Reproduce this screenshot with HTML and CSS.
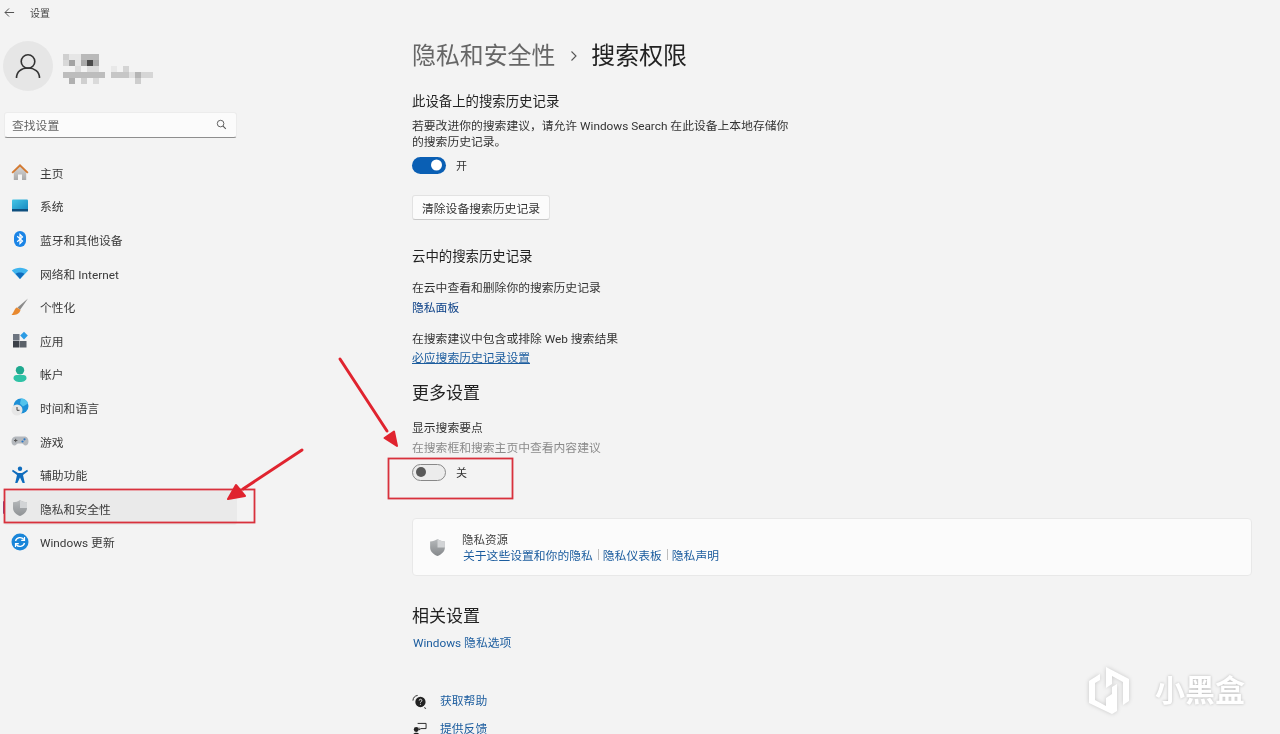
FILE: index.html
```html
<!DOCTYPE html>
<html lang="zh-CN">
<head>
<meta charset="utf-8">
<title>设置</title>
<link rel="stylesheet" href="styles.css">
</head>
<body>
<div class="page">
  <header class="titlebar">
    <svg class="back" viewBox="0 0 12 12"><path d="M11 6H1.2M5.500 1.600 1.100 6l4.400 4.400" fill="none" stroke="#444" stroke-width="1"/></svg>
    <span>设置</span>
  </header>
  <div class="layout">
    <aside class="sidebar">
      <div class="user">
        <div class="avatar">
          <svg viewBox="0 0 26 26"><circle cx="13" cy="8.500" r="6.800" fill="none" stroke="#333" stroke-width="1.600"/><path d="M1.500 25c0-6.500 5-10 11.500-10s11.500 3.500 11.500 10" fill="none" stroke="#333" stroke-width="1.600"/></svg>
        </div>
        <svg class="mosaic" viewBox="0 0 92 32" shape-rendering="crispEdges">
          <rect x="0" y="0" width="6" height="6" fill="#cfcfcf"/><rect x="6" y="0" width="12" height="6" fill="#e6e6e6"/><rect x="18" y="0" width="18" height="6" fill="#b9b9b9"/>
          <rect x="0" y="6" width="6" height="6" fill="#d8d8d8"/><rect x="6" y="6" width="6" height="6" fill="#a3a3a3"/><rect x="12" y="6" width="6" height="6" fill="#e6e6e6"/><rect x="18" y="6" width="6" height="6" fill="#aaa"/><rect x="24" y="6" width="6" height="6" fill="#4a4a4a"/><rect x="30" y="6" width="6" height="6" fill="#aaa"/>
          <rect x="12" y="12" width="6" height="6" fill="#ddd"/><rect x="24" y="12" width="12" height="6" fill="#ddd"/><rect x="48" y="12" width="6" height="6" fill="#e8e8e8"/><rect x="60" y="12" width="6" height="6" fill="#d4d4d4"/>
          <rect x="0" y="18" width="42" height="6" fill="#bdbdbd"/><rect x="48" y="18" width="18" height="6" fill="#c6c6c6"/><rect x="66" y="18" width="6" height="6" fill="#e0e0e0"/><rect x="72" y="18" width="6" height="6" fill="#b5b5b5"/><rect x="78" y="18" width="12" height="6" fill="#d6d6d6"/>
          <rect x="6" y="24" width="6" height="6" fill="#b0b0b0"/><rect x="18" y="24" width="6" height="6" fill="#cfcfcf"/><rect x="30" y="24" width="6" height="6" fill="#dadada"/><rect x="72" y="24" width="6" height="6" fill="#cdcdcd"/>
        </svg>
      </div>
      <div class="search">
        <span>查找设置</span>
        <svg viewBox="0 0 12 12"><circle cx="5" cy="5" r="3.600" fill="none" stroke="#555" stroke-width="1"/><path d="m7.700 7.700 3 3" stroke="#555" stroke-width="1.100"/></svg>
      </div>
      <nav class="nav">
        <a class="nav-item">
          <svg viewBox="0 0 18 18"><defs><linearGradient id="h1" x1="0" y1="0" x2="0" y2="1"><stop offset="0" stop-color="#d8d8d8"/><stop offset="1" stop-color="#a8a8a8"/></linearGradient></defs><path d="M2.800 8.500 9 3l6.200 5.500V17H2.800z" fill="url(#h1)"/><path d="M7 17v-5.500h4V17z" fill="#f5f5f5"/><path d="M.5 9.200 9 1l8.500 8.200-1.300 1.300L9 3.700 1.800 10.500z" fill="#d37a32"/></svg>
          <span>主页</span>
        </a>
        <a class="nav-item">
          <svg viewBox="0 0 18 18"><defs><linearGradient id="g1" x1="0" y1="0" x2="1" y2="1"><stop offset="0" stop-color="#45c6e6"/><stop offset="1" stop-color="#1487c0"/></linearGradient></defs><rect x="1" y="2.500" width="16" height="11" rx="1" fill="url(#g1)"/><rect x="1" y="12" width="16" height="2.500" fill="#0e4f7e"/></svg>
          <span>系统</span>
        </a>
        <a class="nav-item">
          <svg viewBox="0 0 18 18"><rect x="3" y="1" width="12" height="16" rx="6" fill="#1a84e6"/><path d="M6.200 6.200 11.500 11 9 13.500v-9L11.500 7 6.200 11.800" fill="none" stroke="#fff" stroke-width="1.200"/></svg>
          <span>蓝牙和其他设备</span>
        </a>
        <a class="nav-item">
          <svg viewBox="0 0 18 18"><path d="M.8 6.500C5.500 2.800 12.500 2.800 17.200 6.500L9 15z" fill="#3fb4ee"/><path d="M4.500 9.800c2.700-1.900 6.300-1.900 9 0L9 15z" fill="#0f6cbd"/></svg>
          <span>网络和 Internet</span>
        </a>
        <a class="nav-item">
          <svg viewBox="0 0 18 18"><path d="M17 .5 6.500 9.500l2.500 2.500z" fill="#8b8b8b"/><path d="M6 9.500c-2.500.5-2.500 4-5.500 7.500 4 .2 8-.8 9-5z" fill="#e8892f"/></svg>
          <span>个性化</span>
        </a>
        <a class="nav-item">
          <svg viewBox="0 0 18 18"><rect x="2" y="3" width="6.500" height="6.500" fill="#6d7580"/><rect x="2" y="10" width="6.500" height="6.500" fill="#3c4148"/><rect x="9" y="10" width="6.500" height="6.500" fill="#5b6169"/><path d="m13 .8 3.800 3.800L13 8.400 9.200 4.600z" fill="#2b9be4"/></svg>
          <span>应用</span>
        </a>
        <a class="nav-item">
          <svg viewBox="0 0 18 18"><circle cx="9" cy="5.200" r="4.200" fill="#1fa98f"/><path d="M2.500 13c0-2 1.500-3 3-3h7c1.500 0 3 1 3 3 0 2.500-3 4-6.500 4s-6.500-1.500-6.500-4z" fill="#2fc2a6"/></svg>
          <span>帐户</span>
        </a>
        <a class="nav-item">
          <svg viewBox="0 0 18 18"><circle cx="10" cy="8" r="7.500" fill="#1c8fd6"/><path d="M10 .5a7.500 7.500 0 0 1 7 5l-5 3-3-3z" fill="#52c3ec"/><circle cx="6" cy="12" r="5.500" fill="#e6e6e6"/><path d="M6 9v3.300h2.500" fill="none" stroke="#444" stroke-width="1"/></svg>
          <span>时间和语言</span>
        </a>
        <a class="nav-item">
          <svg viewBox="0 0 18 18"><path d="M4.500 4.500h9c2.500 0 4 2.300 4 5s-1.500 4-3 4-2.500-2-3.500-2H7c-1 0-2 2-3.500 2s-3-1.300-3-4 1.500-5 4-5z" fill="#b4b8bd"/><path d="M3 8.500h3.400M4.700 6.800v3.400" stroke="#555" stroke-width="1"/><circle cx="13.500" cy="7.300" r="1.100" fill="#2a78c8"/><circle cx="11.500" cy="9.500" r="1.100" fill="#2a78c8"/></svg>
          <span>游戏</span>
        </a>
        <a class="nav-item">
          <svg viewBox="0 0 18 18"><circle cx="9" cy="2.800" r="2.200" fill="#0f6cbd"/><path d="M1.800 3.800 7 7h4l5.200-3.200.8 1.500L12 9l1.800 8h-2.200L9 11.500 6.400 17H4.200L6 9 1 5.300z" fill="#0f6cbd"/></svg>
          <span>辅助功能</span>
        </a>
        <a class="nav-item active">
          <svg viewBox="0 0 18 18"><defs><linearGradient id="s1" x1="0" y1="0" x2="0" y2="1"><stop offset="0" stop-color="#b6b9bb"/><stop offset="1" stop-color="#8f9295"/></linearGradient></defs><path d="M9 1c2 1.500 4.500 2.200 7 2.300V9c0 4-3.500 6.800-7 8-3.500-1.200-7-4-7-8V3.300C4.500 3.200 7 2.500 9 1z" fill="url(#s1)"/><path d="M9 1c2 1.500 4.500 2.200 7 2.300V9H9z" fill="#d2d4d6"/></svg>
          <span>隐私和安全性</span>
        </a>
        <a class="nav-item">
          <svg viewBox="0 0 18 18"><circle cx="9" cy="9" r="8.500" fill="#1a86d9"/><path d="M4.500 8a4.700 4.700 0 0 1 8.300-1.500M13.500 10a4.700 4.700 0 0 1-8.300 1.500" fill="none" stroke="#fff" stroke-width="1.300"/><path d="M13.500 4v3.300h-3.300M4.500 14v-3.300h3.300" fill="none" stroke="#fff" stroke-width="1.200"/></svg>
          <span>Windows 更新</span>
        </a>
      </nav>
    </aside>
    <main class="main">
      <h1 class="title"><span class="crumb">隐私和安全性</span><svg class="chev" viewBox="0 0 8 12"><path d="m1.500 1.500 4.500 4.500-4.500 4.500" fill="none" stroke="#555" stroke-width="1.100"/></svg><span>搜索权限</span></h1>

      <h3 class="sub first">此设备上的搜索历史记录</h3>
      <p class="text wrap">若要改进你的搜索建议，请允许 Windows Search 在此设备上本地存储你的搜索历史记录。</p>
      <div class="toggle-row on-row"><span class="toggle on"></span><span>开</span></div>
      <button class="btn">清除设备搜索历史记录</button>

      <h3 class="sub cloud">云中的搜索历史记录</h3>
      <p class="text l1">在云中查看和删除你的搜索历史记录</p>
      <p class="link-line"><a class="link dark">隐私面板</a></p>
      <p class="text l2">在搜索建议中包含或排除 Web 搜索结果</p>
      <p class="link-line tight"><a class="link under">必应搜索历史记录设置</a></p>

      <h2 class="section more">更多设置</h2>
      <p class="text l1b">显示搜索要点</p>
      <p class="text muted">在搜索框和搜索主页中查看内容建议</p>
      <div class="toggle-row off-row"><span class="toggle off"></span><span>关</span></div>

      <section class="card">
        <svg class="card-icon" viewBox="0 0 18 18"><defs><linearGradient id="s2" x1="0" y1="0" x2="0" y2="1"><stop offset="0" stop-color="#b6b9bb"/><stop offset="1" stop-color="#85888b"/></linearGradient></defs><path d="M9 1c2 1.500 4.500 2.200 7 2.300V9c0 4-3.500 6.800-7 8-3.500-1.200-7-4-7-8V3.300C4.500 3.200 7 2.500 9 1z" fill="url(#s2)"/><path d="M9 1c2 1.500 4.500 2.200 7 2.300V9H9z" fill="#d2d4d6"/></svg>
        <div class="card-body">
          <div class="card-title">隐私资源</div>
          <div class="card-links"><a class="link">关于这些设置和你的隐私</a><i class="sep"></i><a class="link">隐私仪表板</a><i class="sep"></i><a class="link">隐私声明</a></div>
        </div>
      </section>

      <h2 class="section related">相关设置</h2>
      <p class="link-line win"><a class="link">Windows 隐私选项</a></p>

      <div class="help help-first">
        <svg viewBox="0 0 16 16"><circle cx="9" cy="8.500" r="5.500" fill="#222"/><path d="M1 7a6 6 0 0 1 5-5.500M13 14.500l2 1" fill="none" stroke="#222" stroke-width="1"/><path d="M7.700 7a1.400 1.400 0 1 1 1.900 1.300c-.5.200-.6.500-.6 1M9 10.500v1" fill="none" stroke="#fff" stroke-width=".9"/></svg>
        <a class="link">获取帮助</a>
      </div>
      <div class="help help-second">
        <svg viewBox="0 0 16 16"><circle cx="4.500" cy="8" r="2.600" fill="#222"/><path d="M.5 16c0-3 1.500-4.500 4-4.500s4 1.500 4 4.500z" fill="#222"/><path d="M6 1.500h9v5.500H9.500L7.500 8.500V6" fill="none" stroke="#222" stroke-width="1"/></svg>
        <a class="link">提供反馈</a>
      </div>
    </main>
  </div>

  <svg class="marks" viewBox="0 0 1280 734">
    <rect x="4.500" y="489.500" width="250" height="33" fill="none" stroke="#d8313c" stroke-width="1.800"/>
    <rect x="388.500" y="458.500" width="124" height="40" fill="none" stroke="#d8313c" stroke-width="1.800"/>
    <path d="M340 359 387 431" stroke="#e0242f" stroke-width="3" stroke-linecap="round"/>
    <path d="M397 446 384.500 438 394 431.500z" fill="#e0242f" stroke="#e0242f" stroke-width="2" stroke-linejoin="round"/>
    <path d="M302 450 243 489" stroke="#e0242f" stroke-width="3" stroke-linecap="round"/>
    <path d="M228 499 236 485 245 496z" fill="#e0242f" stroke="#e0242f" stroke-width="2" stroke-linejoin="round"/>
  </svg>

  <div class="watermark">
    <svg viewBox="0 0 44 52"><path d="M18 2 41 14v22l-6 4V17L24 11v8l-6 4zM4 14l8-5v6l-5 3v17l11 6v-8l6-4v-7l5-3v27l-5 3L1 38V16z" fill="#fff" fill-rule="evenodd"/></svg>
    <span>小黑盒</span>
  </div>
</div>
</body>
</html>
```
FILE: styles.css
```css
* { box-sizing: border-box; }
html, body { margin: 0; padding: 0; height: 100%; overflow: hidden; }
body {
  background: #f3f3f3;
  color: #333;
  font-family: Roboto, "Noto Sans CJK SC", sans-serif;
  font-size: 11.8px;
}
h1, h2, h3, p { margin: 0; font-weight: 400; }
a { color: inherit; text-decoration: none; }

.page { position: relative; width: 1280px; height: 734px; overflow: hidden; filter: blur(.35px); }

.titlebar { height: 25px; display: flex; align-items: center; padding-left: 4px; font-size: 10px; color: #444; }
.back { width: 11px; height: 11px; margin-right: 15px; }

.layout { display: flex; align-items: flex-start; }

.sidebar { width: 237px; flex: none; padding: 16px 0 0 4px; }
.user { display: flex; align-items: center; height: 50px; }
.avatar { width: 50px; height: 50px; margin-left: -1px; border-radius: 50%; background: #e6e6e6; display: flex; align-items: center; justify-content: center; }
.avatar svg { width: 26px; height: 26px; }
.mosaic { width: 92px; height: 32px; margin-left: 10px; margin-top: 8px; }

.search {
  margin-top: 21px; height: 26px; padding: 0 9px 2px 7px;
  display: flex; align-items: center; justify-content: space-between;
  background: #fbfbfb; border-radius: 3px; border: 1px solid #ececec; border-bottom: 1px solid #8e8e8e;
  color: #666; font-size: 11.8px;
}
.search svg { width: 11px; height: 11px; }

.nav { margin-top: 17.5px; display: flex; flex-direction: column; }
.nav-item { position: relative; display: flex; align-items: center; height: 33.6px; padding-left: 7px; color: #3a3a3a; }
.nav-item svg { width: 18px; height: 18px; margin-right: 11px; flex: none; }
.nav-item.active { background: #eaeaea; border-radius: 3px; }
.nav-item.active::before { content: ""; position: absolute; left: -1px; top: 10px; width: 2px; height: 13px; background: #7a3f86; border-radius: 1px; }

.main { flex: 1; padding: 13px 0 0 175px; }

.title { display: flex; align-items: center; height: 36px; font-size: 23.9px; line-height: 36px; color: #222; }
.crumb { color: #666; }
.chev { width: 8px; height: 12px; margin: 0 13px 0 15px; }

.sub { font-size: 13.4px; line-height: 20px; color: #222; }
.first { margin-top: 18px; }
.cloud { margin-top: 27px; }

.text { line-height: 16px; color: #333; }
.wrap { margin-top: 6px; width: 380px; }
.l1 { margin-top: 13px; }
.l2 { margin-top: 15px; }
.l1b { margin-top: 15px; }
.muted { margin-top: 4px; color: #8a8a8a; }

.toggle-row { display: flex; align-items: center; height: 18px; font-size: 11px; color: #333; }
.on-row { margin-top: 6px; }
.off-row { margin-top: 7px; }
.toggle { position: relative; width: 34px; height: 17px; border-radius: 9px; margin-right: 10px; }
.toggle::after { content: ""; position: absolute; top: 50%; border-radius: 50%; transform: translateY(-50%); }
.toggle.on { background: #0a5fb4; }
.toggle.on::after { right: 4px; width: 11px; height: 11px; background: #fff; }
.toggle.off { background: #ececec; border: 1px solid #888; }
.toggle.off::after { left: 3px; width: 10px; height: 10px; background: #595959; }

.btn {
  display: block; margin-top: 21px; width: 138px; height: 25px; padding: 0 0 1px;
  background: #fbfbfb; border: 1px solid #e2e2e2; border-bottom-color: #c8c8c8; border-radius: 3px;
  font: inherit; color: #333;
}

.link { color: #1b5c9e; }
.link.dark { color: #0a3f86; }
.link.under { text-decoration: underline; color: #1b5c9e; }
.link-line { line-height: 16px; margin-top: 4px; }
.link-line.tight { margin-top: 3px; }
.link-line.win { margin-top: 7px; padding-left: 1px; }

.section { font-size: 17px; line-height: 24px; color: #222; }
.more { margin-top: 15px; }
.related { margin-top: 28px; }

.card {
  margin-top: 37px; width: 840px; height: 58px; padding: 1px 0 0 15px;
  display: flex; align-items: center;
  background: #fbfbfb; border: 1px solid #e8e8e8; border-radius: 4px;
}
.card-icon { width: 19px; height: 19px; margin-right: 15px; flex: none; }
.card-body { line-height: 16px; }
.card-title { font-size: 11.5px; color: #444; }
.card-links { display: flex; align-items: center; margin-left: 1px; }
.sep { width: 1px; height: 11px; margin: -2px 5px 0; background: #bdbdbd; }
.sep + .link { margin-left: -1px; }

.help { display: flex; align-items: center; line-height: 16px; }
.help svg { width: 15px; height: 15px; margin-right: 13px; flex: none; }
.help-first { margin-top: 42px; }
.help-second { margin-top: 12px; }

.marks { position: absolute; inset: 0; width: 1280px; height: 734px; pointer-events: none; }

.watermark { position: absolute; left: 1088px; top: 665px; display: flex; align-items: center; gap: 23px; }
.watermark svg { width: 44px; height: 52px; filter: drop-shadow(0 0 2px rgba(0,0,0,.18)); }
.watermark span { font-size: 30px; line-height: 52px; font-weight: 700; color: #fff; text-shadow: 0 0 3px rgba(0,0,0,.25); }
```
